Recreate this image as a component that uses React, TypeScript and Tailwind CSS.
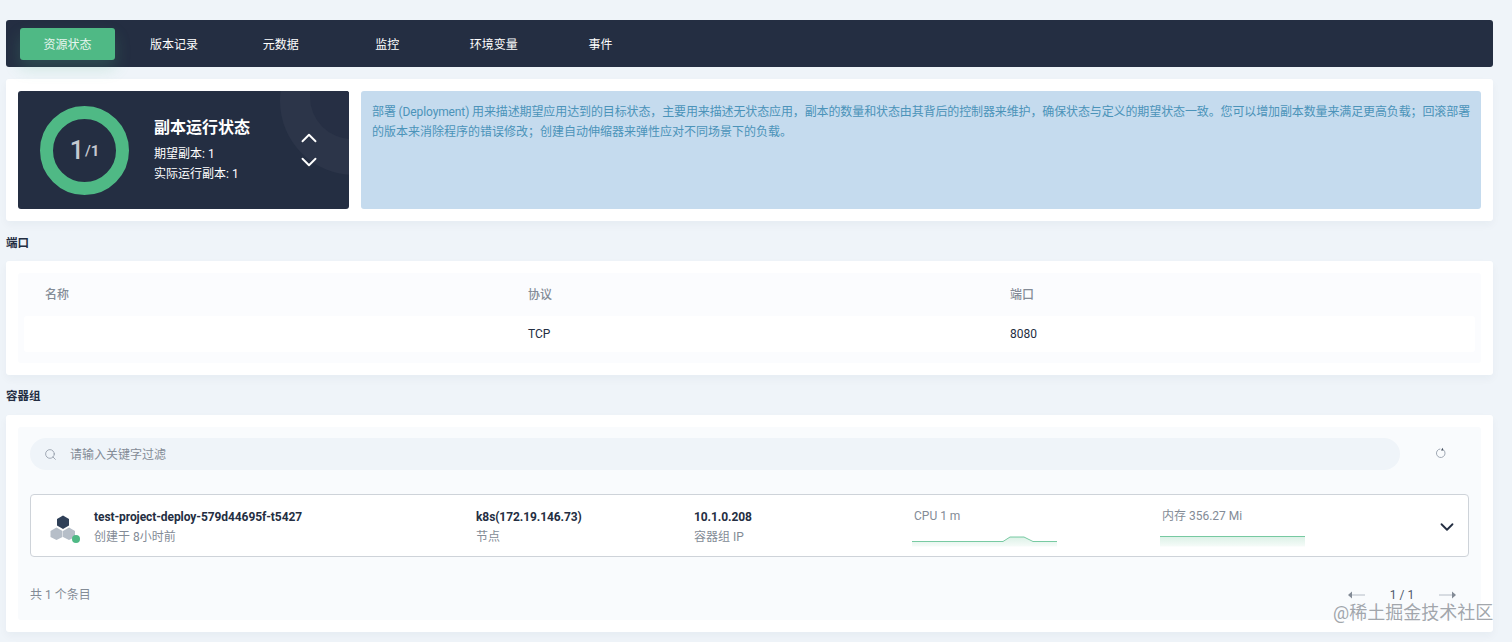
import { ChevronDown, ChevronUp, Search } from 'lucide-react';

const tabs = ['资源状态', '版本记录', '元数据', '监控', '环境变量', '事件'];

function HexIcon() {
  return (
    <svg className="w-[32px] h-[30px] shrink-0 overflow-visible" viewBox="0 0 32 30">
      <polygon points="13,4.5 19,8 19,14.5 13,18 7,14.5 7,8" fill="#2f4058" />
      <polygon points="6.5,16.5 12.5,20 12.5,26 6.5,29 0.5,26 0.5,20" fill="#b6bec8" />
      <polygon points="19,16.5 25,20 25,26 19,29 13,26 13,20" fill="#b6bec8" />
      <circle cx="26" cy="28" r="4" fill="#4fb985" />
    </svg>
  );
}

function Spark({ id, points }: { id: string; points: string }) {
  return (
    <svg className="w-[145px] h-[16px] block" viewBox="0 0 145 16">
      <defs>
        <linearGradient id={id} x1="0" y1="0" x2="0" y2="1">
          <stop offset="0" stopColor="#4fb985" stopOpacity="0.2" />
          <stop offset="1" stopColor="#4fb985" stopOpacity="0.05" />
        </linearGradient>
      </defs>
      <polygon points={`0,15.5 ${points} 145,15.5`} fill={`url(#${id})`} />
      <polyline points={points} fill="none" stroke="#4fb985" strokeOpacity="0.75" strokeWidth="1" />
    </svg>
  );
}

export default function App() {
  return (
    <div className="h-[642px] overflow-hidden bg-[#eff4f9] pl-[6px] pr-[19px] pt-[20px] relative font-['Roboto','Noto_Sans_CJK_SC',sans-serif] text-[12px] text-[#242e42]">
      {/* Tabs */}
      <nav className="h-[47px] bg-[#242e42] rounded-[3px] flex items-center gap-[11.6px] pl-[14px]">
        {tabs.map((t, i) => (
          <div
            key={t}
            className={
              i === 0
                ? 'w-[95px] h-[32px] pt-[2px] rounded-[3px] bg-[#4fb985] text-[#e6f5ee] flex items-center justify-center shadow-[0_8px_16px_rgba(79,185,133,0.22)]'
                : 'w-[95px] h-[32px] pt-[2px] text-white flex items-center justify-center'
            }
          >
            {t}
          </div>
        ))}
      </nav>

      {/* Replica status */}
      <section className="mt-[12px] h-[142px] bg-white rounded-[3px] p-[12px] flex gap-[12px] shadow-[0_4px_8px_rgba(36,46,66,0.04)]">
        <div className="relative w-[331px] h-[118px] shrink-0 bg-[#242e42] rounded-[3px] overflow-hidden flex items-center text-white">
          <div className="absolute left-[262px] -top-[64px] w-[148px] h-[148px] rounded-full bg-[#2c3549] flex items-center justify-center">
            <div className="w-[84px] h-[84px] rounded-full bg-[#262f44] -translate-x-[2px] -translate-y-[4px]"></div>
          </div>
          <div className="relative ml-[22px] w-[89px] h-[89px] rounded-full border-[13px] border-[#4fb985] flex items-center justify-center text-[#c4c9d0] font-medium">
            <span className="text-[25px] leading-none">1</span>
            <span className="text-[15px] leading-none mt-[3px] ml-[1px]">/</span>
            <span className="text-[15px] leading-none mt-[3px] font-bold">1</span>
          </div>
          <div className="relative ml-[25px] w-[130px]">
            <div className="text-[16px] leading-[22px] font-bold">副本运行状态</div>
            <div className="mt-[5px] leading-[20px]">期望副本: 1</div>
            <div className="leading-[20px] mb-[-1px]">实际运行副本: 1</div>
          </div>
          <div className="relative ml-[12px] flex flex-col items-center">
            <ChevronUp className="w-[26px] h-[26px]" strokeWidth={1.75} />
            <ChevronDown className="w-[26px] h-[26px] -mt-[2px]" strokeWidth={1.75} />
          </div>
        </div>
        <div className="flex-1 bg-[#c5dbee] rounded-[3px] pl-[11px] pt-[11px] text-[#4b93b9] leading-[20px] whitespace-nowrap">
          <div className="tracking-[-0.12px]">部署 (Deployment) 用来描述期望应用达到的目标状态，主要用来描述无状态应用，副本的数量和状态由其背后的控制器来维护，确保状态与定义的期望状态一致。您可以增加副本数量来满足更高负载；回滚部署</div>
          <div>的版本来消除程序的错误修改；创建自动伸缩器来弹性应对不同场景下的负载。</div>
        </div>
      </section>

      {/* Ports */}
      <h2 className="mt-[14px] h-[16px] leading-[16px] font-bold text-[11.5px]">端口</h2>
      <section className="mt-[10px] h-[114px] bg-white rounded-[3px] p-[12px] shadow-[0_4px_8px_rgba(36,46,66,0.04)]">
        <div className="h-[90px] bg-[#fbfcfe] rounded-[3px]">
          <div className="h-[43px] flex items-center pl-[27px] text-[#838b96] font-medium">
            <span className="w-[483px]">名称</span>
            <span className="w-[482px]">协议</span>
            <span>端口</span>
          </div>
          <div className="mx-[6px] h-[36px] bg-white rounded-[3px] flex items-center pl-[21px]">
            <span className="w-[483px]"></span>
            <span className="w-[482px]">TCP</span>
            <span>8080</span>
          </div>
        </div>
      </section>

      {/* Pods */}
      <h2 className="mt-[13px] h-[16px] leading-[16px] font-bold text-[11.5px]">容器组</h2>
      <section className="mt-[11px] h-[217px] bg-white rounded-[3px] p-[12px] shadow-[0_4px_8px_rgba(36,46,66,0.04)]">
        <div className="h-[193px] bg-[#f9fbfd] rounded-[3px] px-[12px] pt-[11px]">
          <div className="flex items-center">
            <div className="w-[1370px] h-[32px] rounded-full bg-[#eff4f9] flex items-center pl-[14px] text-[#838b96]">
              <Search className="w-[13px] h-[13px] text-[#8f98a5]" strokeWidth={1.5} />
              <span className="ml-[13px] pt-[2px]">请输入关键字过滤</span>
            </div>
            <svg className="ml-[35px] w-[12px] h-[13px] -mt-[1px] text-[#9aa3af]" viewBox="0 0 14 14" fill="none">
              <path d="M9.6 2.6a5 5 0 1 1-3.4-.9" stroke="currentColor" strokeWidth="1.1" />
              <path d="M8.8 .4 10 3.4 7 3.6z" fill="#4a5464" />
            </svg>
          </div>
          <div className="mt-[24px] h-[63px] bg-white border border-[#ced3d9] rounded-[4px] flex items-center pl-[19px] pr-[10px]">
            <HexIcon />
            <div className="ml-[12px] w-[382px] pt-[2px]">
              <div className="font-bold leading-[20px] text-[#242e42] tracking-[-0.08px]">test-project-deploy-579d44695f-t5427</div>
              <div className="text-[#838b96] leading-[20px]">创建于 8小时前</div>
            </div>
            <div className="w-[218px] pt-[2px]">
              <div className="font-bold leading-[20px] tracking-[-0.08px]">k8s(172.19.146.73)</div>
              <div className="text-[#838b96] leading-[20px]">节点</div>
            </div>
            <div className="w-[218px] pt-[2px]">
              <div className="font-bold leading-[20px] tracking-[-0.08px]">10.1.0.208</div>
              <div className="text-[#838b96] leading-[20px]">容器组 IP</div>
            </div>
            <div className="w-[248px] self-start pt-[11px]">
              <div className="pl-[2px] text-[#838b96] leading-[20px]">CPU 1 m</div>
              <div className="mt-[5px]">
                <Spark id="cpu" points="0,10.5 91,10.5 98,6 112,6 121,10.5 145,10.5" />
              </div>
            </div>
            <div className="w-[248px] self-start pt-[11px]">
              <div className="pl-[2px] text-[#838b96] leading-[20px]">内存 356.27 Mi</div>
              <div className="mt-[5px]">
                <Spark id="mem" points="0,5.5 145,5.5" />
              </div>
            </div>
            <ChevronDown className="ml-auto w-[22px] h-[22px] translate-y-[1px] text-[#242e42]" strokeWidth={2} />
          </div>
          <div className="mt-[27px] h-[20px] pt-[2px] flex items-center text-[#838b96]">
            <span>共 1 个条目</span>
            <div className="ml-auto mr-[13px] flex items-center">
              <svg className="w-[18px] h-[10px]" viewBox="0 0 18 10" fill="none">
                <path d="M3 5h14" stroke="#b5bcc6" strokeWidth="1" />
                <path d="M0 5l4-3.5v7z" fill="#838b96" />
              </svg>
              <span className="w-[72px] text-center text-[#4f5a6b]">1 / 1</span>
              <svg className="w-[18px] h-[10px]" viewBox="0 0 18 10" fill="none">
                <path d="M1 5h14" stroke="#b5bcc6" strokeWidth="1" />
                <path d="M18 5l-4-3.5v7z" fill="#838b96" />
              </svg>
            </div>
          </div>
        </div>
      </section>

      {/* Watermark */}
      <div className="absolute left-[1333px] top-[602px] text-[18px] leading-[22px] text-[#8a8f96]/80 whitespace-nowrap">@稀土掘金技术社区</div>
    </div>
  );
}
